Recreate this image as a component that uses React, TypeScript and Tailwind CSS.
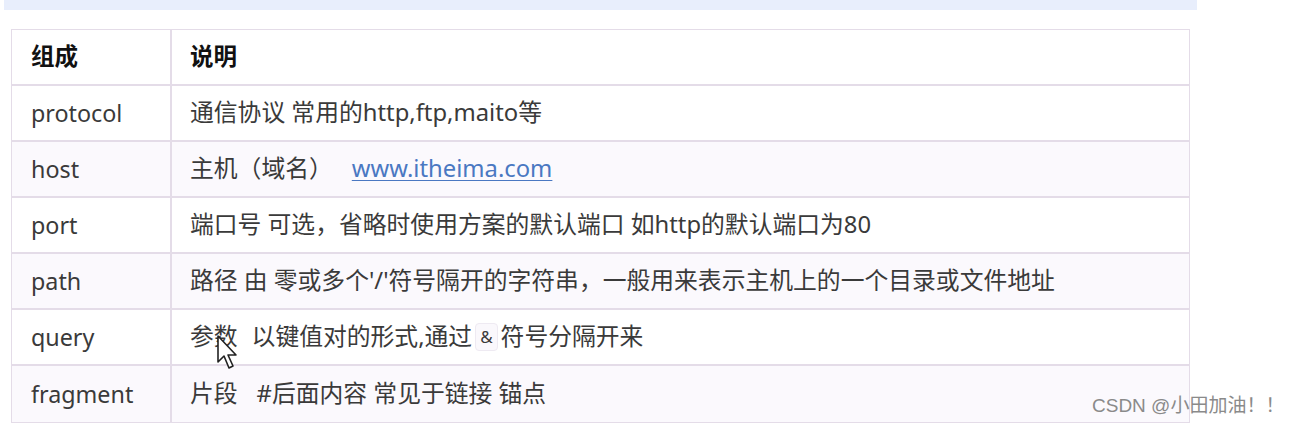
import React from 'react';

const rows: { key: string; desc: React.ReactNode }[] = [
  { key: 'protocol', desc: '通信协议 常用的http,ftp,maito等' },
  {
    key: 'host',
    desc: (
      <>
        主机（域名）
        <a className="ml-[19px] text-[#4a78c2] underline underline-offset-[3px] decoration-1" href="#">
          www.itheima.com
        </a>
      </>
    ),
  },
  { key: 'port', desc: '端口号 可选，省略时使用方案的默认端口 如http的默认端口为80' },
  { key: 'path', desc: "路径 由 零或多个'/'符号隔开的字符串，一般用来表示主机上的一个目录或文件地址" },
  {
    key: 'query',
    desc: (
      <>
        参数
        <span className="ml-[14px]">以键值对的形式,通过</span>
        <span className="mx-[3px] inline-block rounded-[4px] border border-[#eeeaf2] bg-[#faf8fc] px-[4px] text-[17px] leading-[26px] align-[1px]">&amp;</span>
        符号分隔开来
      </>
    ),
  },
  {
    key: 'fragment',
    desc: (
      <>
        片段<span className="ml-[19px]">#后面内容 常见于链接 锚点</span>
      </>
    ),
  },
];

const Cursor: React.FC = () => (
  <svg className="absolute left-[216px] top-[334px]" width="24" height="38" viewBox="0 0 24 38">
    <path d="M2 2 L2 28 L8 22 L13 34 L17 32 L12 21 L20 21 Z" fill="#fff" stroke="#222" strokeWidth="1.6" strokeLinejoin="round" />
  </svg>
);

const App: React.FC = () => {
  return (
    <div
      className="relative w-[1290px] h-[424px] bg-white overflow-hidden text-[#333]"
      style={{ fontFamily: '"Noto Sans", "Open Sans", "Noto Sans CJK SC", sans-serif' }}
    >
      <div className="ml-[4px] w-[1193px] h-[10px] bg-[#e8eefc]" />
      <div className="ml-[11px] mt-[19px] w-[1179px] border border-[#e4dce8]">
        <div className="flex h-[56px] border-b-2 border-[#e4dce8] bg-white">
          <div className="w-[160px] shrink-0 border-r-2 border-[#e4dce8] pl-[19px] flex items-center text-[23.5px] font-bold text-[#111]">组成</div>
          <div className="flex-1 pl-[18px] flex items-center text-[23.5px] font-bold text-[#111]">说明</div>
        </div>
        {rows.map((r, i) => (
          <div
            key={r.key}
            className={`flex h-[56px] ${i < rows.length - 1 ? 'border-b-2 border-[#e4dce8]' : 'h-[52px]'} ${i % 2 === 1 ? 'bg-[#fbf9fd]' : 'bg-white'}`}
          >
            <div className="w-[160px] shrink-0 border-r-2 border-[#e4dce8] pl-[19px] flex items-center text-[23.3px] text-[#3a3a3a]">{r.key}</div>
            <div className="flex-1 pl-[18px] flex items-center text-[23.8px] text-[#3a3a3a] whitespace-pre">{r.desc}</div>
          </div>
        ))}
      </div>
      <Cursor />
      <div
        className="absolute left-[1092px] top-[392px] text-[19px] text-[#8a8a8a]"
        style={{ fontFamily: '"Liberation Sans", "Noto Sans CJK SC", sans-serif' }}
      >
        CSDN @小田加油！！
      </div>
    </div>
  );
};

export default App;
